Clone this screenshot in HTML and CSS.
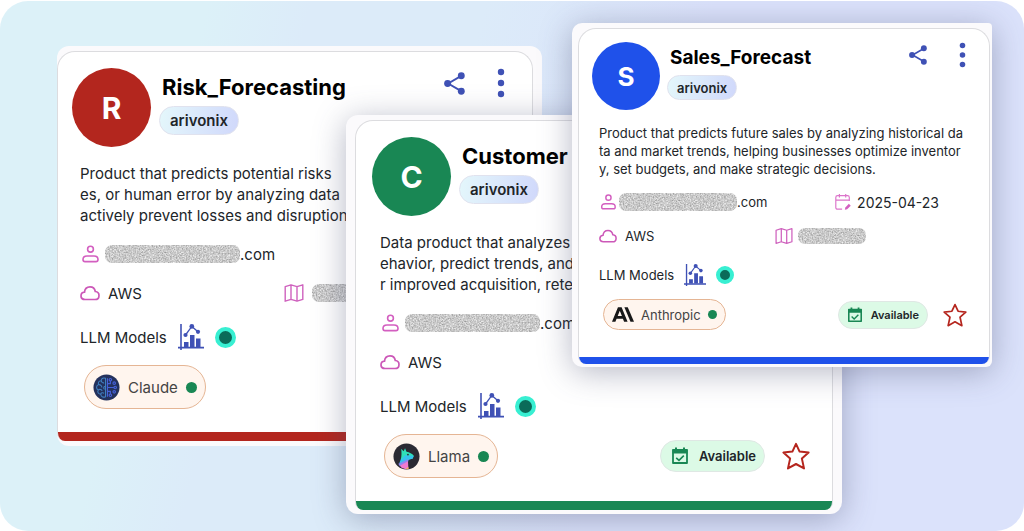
FILE: index.html
```html
<!DOCTYPE html>
<html lang="en">
<head>
    <meta charset="UTF-8">
    <meta name="viewport" content="width=device-width, initial-scale=1.0">
    <title>Data Products</title>
    <link rel="stylesheet" href="styles.css">
</head>
<body>
    <!-- Shared icons -->
    <svg class="sprite" aria-hidden="true">
        <filter id="grain" x="0" y="0" width="100%" height="100%" color-interpolation-filters="sRGB">
            <feTurbulence type="fractalNoise" baseFrequency="0.7" numOctaves="2" seed="4"/>
            <feColorMatrix values="0.5 0 0 0 0.54  0.5 0 0 0 0.54  0.5 0 0 0 0.54  0 0 0 0 1"/>
        </filter>
        <symbol id="share" viewBox="0 0 20 22">
            <path d="M16 4 L4 11 L16 18" fill="none" stroke="#3f51b5" stroke-width="1.8"/>
            <circle cx="16.5" cy="3.6" r="3.3" fill="#3f51b5"/>
            <circle cx="3.4" cy="11" r="3.3" fill="#3f51b5"/>
            <circle cx="16.5" cy="18.4" r="3.3" fill="#3f51b5"/>
        </symbol>
        <symbol id="dots" viewBox="0 0 8 30">
            <circle cx="4" cy="4" r="3.2" fill="#3f51b5"/>
            <circle cx="4" cy="15" r="3.2" fill="#3f51b5"/>
            <circle cx="4" cy="26" r="3.2" fill="#3f51b5"/>
        </symbol>
        <symbol id="user" viewBox="0 0 20 20">
            <g fill="none" stroke="#d35fc0" stroke-width="1.6">
                <circle cx="10.5" cy="5.2" r="2.9"/>
                <path d="M7 12 H14 C16.5 12 18 13.7 18 15.5 C18 16.9 17.2 17.6 16 17.6 H5 C3.8 17.6 3 16.9 3 15.5 C3 13.7 4.5 12 7 12 Z"/>
            </g>
        </symbol>
        <symbol id="cloud" viewBox="0 0 20 20">
            <path d="M5 16.5 C2.6 16.5 1 15 1 12.9 C1 10.9 2.5 9.4 4.5 9.2 C4.8 5.8 7 3.8 10 3.8 C12.9 3.8 14.8 5.5 15.3 8.5 C17.6 8.7 19 10.3 19 12.4 C19 14.8 17.4 16.5 15 16.5 Z" fill="none" stroke="#cc58b8" stroke-width="1.7"/>
        </symbol>
        <symbol id="map" viewBox="0 0 20 20">
            <path d="M1.2 3.6 L7 1.8 L13 3.6 L18.8 1.8 V16.4 L13 18.2 L7 16.4 L1.2 18.2 Z M7 1.8 V16.4 M13 3.6 V18.2" fill="none" stroke="#cf62be" stroke-width="1.4" stroke-linejoin="round"/>
        </symbol>
        <symbol id="calendar" viewBox="0 0 20 20">
            <path d="M9 18 H4 C2.7 18 2 17.3 2 16 V5 C2 3.8 2.7 3 4 3 H15 C16.3 3 17 3.8 17 5 V9 M2 8 H17 M6 1 V5 M13 1 V5" fill="none" stroke="#dc74ca" stroke-width="1.3"/>
            <path d="M12 18.5 L12.6 16 L16.5 12 L18.6 14.2 L14.6 18 Z" fill="#d35fc0"/>
        </symbol>
        <symbol id="chart" viewBox="0 0 26 28">
            <path d="M3 1 V27 M0 24.6 H26" stroke="#3f51b5" stroke-width="1.6"/>
            <path d="M6 19 H10.5 V24 H6 Z M12 12 H16.5 V24 H12 Z M18 15.5 H22.5 V24 H18 Z" fill="#3f51b5"/>
            <path d="M7.5 12 L13.8 3.4 L20 8.8" fill="none" stroke="#3f51b5" stroke-width="1.3"/>
            <circle cx="7.5" cy="12" r="2.1" fill="#3f51b5"/>
            <circle cx="13.8" cy="3.4" r="2.4" fill="#3f51b5"/>
            <circle cx="20" cy="8.8" r="2.1" fill="#3f51b5"/>
        </symbol>
        <symbol id="available" viewBox="0 0 18 18">
            <path d="M2 3 H16 V16 H2 Z" fill="none" stroke="#198754" stroke-width="1.8" stroke-linejoin="round"/>
            <path d="M1.5 2.5 H16.5 V6.5 H1.5 Z M4 0.5 H6 V3 H4 Z M12 0.5 H14 V3 H12 Z" fill="#198754"/>
            <path d="M5.2 10.8 L8 13.4 L12.8 8.6" fill="none" stroke="#198754" stroke-width="1.6"/>
        </symbol>
        <symbol id="star" viewBox="0 0 28 28">
            <path d="M14 1.8 L17.6 9.6 L26.6 10.6 L19.9 16.6 L22 26.4 L14 22 L6 26.4 L8.1 16.6 L1.4 10.6 L10.4 9.6 Z" fill="none" stroke="#b5261e" stroke-width="2" stroke-linejoin="round"/>
        </symbol>
    </svg>

    <main class="stage">
        <section class="frame frame-risk">
            <article class="card card-red">
                <header class="card-header">
                    <div class="avatar">R</div>
                    <div class="heading">
                        <h2>Risk_Forecasting</h2>
                        <span class="tag">arivonix</span>
                    </div>
                    <div class="actions">
                        <button aria-label="Share"><svg class="icon-share"><use href="#share"/></svg></button>
                        <button aria-label="More"><svg class="icon-dots"><use href="#dots"/></svg></button>
                    </div>
                </header>
                <p class="description">Product that predicts potential risks<br>es, or human error by analyzing data<br>actively prevent losses and disruptions</p>
                <div class="row">
                    <svg class="icon"><use href="#user"/></svg>
                    <span class="value value-mail"><svg class="redacted redacted-mail"><rect width="100%" height="100%" filter="url(#grain)"/></svg>.com</span>
                </div>
                <div class="row row-cloud">
                    <svg class="icon"><use href="#cloud"/></svg>
                    <span class="value">AWS</span>
                    <span class="side side-map">
                        <svg class="icon"><use href="#map"/></svg>
                        <svg class="redacted"><rect width="100%" height="100%" filter="url(#grain)"/></svg>
                    </span>
                </div>
                <div class="models">
                    <span>LLM Models</span>
                    <svg class="icon-chart"><use href="#chart"/></svg>
                    <span class="pulse"></span>
                </div>
                <footer class="card-footer">
                    <span class="chip">
                        <svg class="logo" viewBox="0 0 28 28">
                            <circle cx="14" cy="14" r="13.5" fill="#24315c"/>
                            <g fill="none" stroke="#3f7fc0" stroke-width="1.1">
                                <path d="M13 4.5 C10 3.5 8.5 5 8.5 7 C5.5 7 5 9.5 6 11 C3 12 3 15.5 5.5 16.5 C4 19 6 21 8 21 C8.5 24 11 24.5 13 23.5 Z"/>
                                <path d="M8.5 7 C9 9 10.5 9.5 11.5 9 M6 11 C8 11 9.5 12.5 9 14 M5.5 16.5 C7 15.5 9 16 9.5 17.5 M8 21 C8.5 19.5 10 19 11.5 20 M13 13 C11 12.5 10.5 15 12 16"/>
                            </g>
                            <g fill="none" stroke="#4561d8" stroke-width="1.2">
                                <path d="M15 4.5 V23.5 M15 10 H18 V7 M15 14 H22 M15 18 H18 V21"/>
                                <circle cx="18" cy="6" r="1.3"/>
                                <circle cx="22" cy="9.5" r="1.3"/>
                                <circle cx="23" cy="14" r="1.3"/>
                                <circle cx="22" cy="18.5" r="1.3"/>
                                <circle cx="18" cy="22" r="1.3"/>
                            </g>
                        </svg>
                        Claude
                        <span class="status"></span>
                    </span>
                </footer>
            </article>
        </section>

        <section class="frame frame-customer">
            <article class="card card-green">
                <header class="card-header">
                    <div class="avatar">C</div>
                    <div class="heading">
                        <h2>Customer</h2>
                        <span class="tag">arivonix</span>
                    </div>
                </header>
                <p class="description">Data product that analyzes<br>ehavior, predict trends, and<br>r improved acquisition, retention</p>
                <div class="row">
                    <svg class="icon"><use href="#user"/></svg>
                    <span class="value value-mail"><svg class="redacted redacted-mail"><rect width="100%" height="100%" filter="url(#grain)"/></svg>.com</span>
                </div>
                <div class="row row-cloud">
                    <svg class="icon"><use href="#cloud"/></svg>
                    <span class="value">AWS</span>
                </div>
                <div class="models">
                    <span>LLM Models</span>
                    <svg class="icon-chart"><use href="#chart"/></svg>
                    <span class="pulse"></span>
                </div>
                <footer class="card-footer">
                    <span class="chip">
                        <svg class="logo" viewBox="0 0 28 28">
                            <circle cx="14" cy="14" r="13.5" fill="#2b2a33"/>
                            <path d="M8 17 C9 14 9 10 8.5 6 L11 8.5 L12.5 5.5 L14 9 C17 9.5 20 11 21.5 13 L20.5 16 L15 17 Z" fill="#2fe0b8"/>
                            <path d="M8 17 L13 12.5 L21.5 13.5 L20.5 16 L16 17.5 L15.5 20 L6.5 21 Z" fill="#35c4ec"/>
                            <path d="M5.5 21.5 L16 16.5 L15.5 20 L7 24 Z" fill="#8d86f2"/>
                            <path d="M7 23.5 L15.5 19 L16 27 C12.5 27.5 9 26 7 23.5 Z" fill="#f07ad0"/>
                            <path d="M13 27 L16 24.5 V27 Z" fill="#f5b04c"/>
                            <circle cx="15.5" cy="12" r="0.9" fill="#2b2a33"/>
                        </svg>
                        Llama
                        <span class="status"></span>
                    </span>
                    <span class="available"><svg class="icon-available"><use href="#available"/></svg>Available</span>
                    <button class="favorite" aria-label="Add to favorites"><svg class="icon-star"><use href="#star"/></svg></button>
                </footer>
            </article>
        </section>

        <section class="frame frame-sales">
            <article class="card card-blue">
                <header class="card-header">
                    <div class="avatar">S</div>
                    <div class="heading">
                        <h2>Sales_Forecast</h2>
                        <span class="tag">arivonix</span>
                    </div>
                    <div class="actions">
                        <button aria-label="Share"><svg class="icon-share"><use href="#share"/></svg></button>
                        <button aria-label="More"><svg class="icon-dots"><use href="#dots"/></svg></button>
                    </div>
                </header>
                <p class="description">Product that predicts future sales by analyzing historical da<br>ta and market trends, helping businesses optimize inventor<br>y, set budgets, and make strategic decisions.</p>
                <div class="row">
                    <svg class="icon"><use href="#user"/></svg>
                    <span class="value value-mail"><svg class="redacted redacted-mail"><rect width="100%" height="100%" filter="url(#grain)"/></svg>.com</span>
                    <span class="side side-date">
                        <svg class="icon"><use href="#calendar"/></svg>
                        2025-04-23
                    </span>
                </div>
                <div class="row row-cloud">
                    <svg class="icon"><use href="#cloud"/></svg>
                    <span class="value">AWS</span>
                    <span class="side side-map">
                        <svg class="icon"><use href="#map"/></svg>
                        <svg class="redacted"><rect width="100%" height="100%" filter="url(#grain)"/></svg>
                    </span>
                </div>
                <div class="models">
                    <span>LLM Models</span>
                    <svg class="icon-chart"><use href="#chart"/></svg>
                    <span class="pulse"></span>
                </div>
                <footer class="card-footer">
                    <span class="chip">
                        <svg class="logo" viewBox="0 0 24 18">
                            <path d="M6.5 1 H10.5 L17 17 H13.2 L11.9 13.5 H5 L3.7 17 H0 Z M8.5 4.8 L6.2 10.6 H10.8 Z" fill="#181818" fill-rule="evenodd"/>
                            <path d="M13.5 1 H17.2 L24 17 H20.2 Z" fill="#181818"/>
                        </svg>
                        Anthropic
                        <span class="status"></span>
                    </span>
                    <span class="available"><svg class="icon-available"><use href="#available"/></svg>Available</span>
                    <button class="favorite" aria-label="Add to favorites"><svg class="icon-star"><use href="#star"/></svg></button>
                </footer>
            </article>
        </section>
    </main>
</body>
</html>
```
FILE: styles.css
```css
* {
    box-sizing: border-box;
}
body {
    margin: 0;
    padding-top: 1px;
    background-color: #fff;
    font-family: Inter, "Liberation Sans", sans-serif;
    color: #212529;
}
h2, p {
    margin: 0;
}
button {
    padding: 0;
    border: none;
    background: none;
    cursor: pointer;
}
svg {
    display: block;
    flex: none;
}
.sprite {
    position: absolute;
    width: 0;
    height: 0;
}
.stage {
    position: relative;
    min-height: calc(100vh - 1px);
    overflow: hidden;
    border-radius: 28px;
    background: linear-gradient(104deg, #dcf1f8 0%, #dcf1f8 18%, #dcebf9 27%, #dcebf9 42%, #dbe2fb 62%, #dbe2fb 100%);
}

/* Overlapping product cards */
.frame {
    position: absolute;
    border-radius: 12px;
    background-color: #fbfafc;
}
.frame-risk {
    left: 57px;
    top: 45px;
    width: 485px;
    padding: 5px 9px 5px 0;
}
.frame-customer {
    left: 346px;
    top: 114px;
    width: 496px;
    padding: 5px 9px 4px 9px;
    box-shadow: 0 5px 32px rgba(70, 75, 110, 0.4);
}
.frame-sales {
    left: 572px;
    top: 22px;
    width: 420px;
    padding: 5px 2px 3px 6px;
    border-radius: 10px 4px 6px 10px;
    box-shadow: 0 5px 32px rgba(70, 75, 110, 0.4);
}
.card {
    overflow: hidden;
    padding: 16px 24px 0;
    border: 1px solid #dcdcdf;
    border-bottom: none;
    border-radius: 18px 18px 8px 8px;
    background-color: #fff;
    font-size: 15px;
    white-space: nowrap;
}
.card::after {
    content: "";
    display: block;
    height: 9px;
    margin: 23px -24px 0;
    background-color: #b3261e;
}
.card-red {
    padding-left: 22px;
}
.card-green {
    padding-right: 22px;
}
.card-green::after {
    background-color: #198754;
}
.card-blue::after {
    background-color: #1f51ea;
}

.card-header {
    display: flex;
    align-items: flex-start;
    margin-left: -8px;
}
.avatar {
    display: flex;
    align-items: center;
    justify-content: center;
    flex: none;
    width: 79px;
    height: 79px;
    border-radius: 50%;
    background-color: #b3261e;
    color: #fff;
    font-size: 30px;
    font-weight: 700;
}
.card-green .avatar {
    background-color: #198754;
}
.card-blue .avatar {
    background-color: #1f51ea;
}
.heading {
    flex: 1;
    margin: 5px 0 0 8px;
}
.heading h2 {
    padding-left: 3px;
    color: #000;
    font-size: 22px;
    font-weight: 700;
    line-height: 28px;
}
.tag {
    display: inline-flex;
    align-items: center;
    height: 29px;
    margin-top: 5px;
    padding: 0 10px;
    border: 1px solid #e0e2ee;
    border-radius: 15px;
    background: linear-gradient(100deg, #e4f7fb, #d0d8fb);
    font-size: 15px;
    font-weight: 600;
}
.actions {
    display: flex;
    align-items: center;
    gap: 32px;
    margin-right: 3px;
}
.icon-share {
    width: 21px;
    height: 23px;
}
.icon-dots {
    width: 8px;
    height: 30px;
}
.description {
    margin-top: 16px;
    line-height: 21px;
}
.row {
    display: flex;
    align-items: center;
    height: 20px;
    margin-top: 18px;
}
.row-cloud {
    margin-top: 19px;
}
.icon {
    width: 20px;
    height: 20px;
}
.value {
    display: flex;
    align-items: center;
    margin-left: 8px;
}
.value-mail {
    margin-left: 5px;
}
.redacted {
    width: 78px;
    height: 18px;
    border-radius: 7px;
}
.redacted-mail {
    width: 135px;
}
.side {
    display: flex;
    align-items: center;
    gap: 8px;
    margin-left: auto;
}
.card-red .side {
    margin-right: 118px;
}
.models {
    display: flex;
    align-items: center;
    height: 28px;
    margin-top: 20px;
}
.icon-chart {
    width: 26px;
    height: 28px;
    margin: 0 11px;
}
.pulse {
    width: 21px;
    height: 21px;
    border: 4px solid #38efd2;
    border-radius: 50%;
    background-color: #0b6b59;
}
.card-footer {
    display: flex;
    align-items: center;
    margin-top: 14px;
}
.chip {
    display: flex;
    align-items: center;
    gap: 8px;
    height: 44px;
    margin: 0 auto 0 4px;
    padding: 0 8px;
    border: 1px solid #e5b594;
    border-radius: 22px;
    background-color: #fff5ee;
    color: #444;
}
.logo {
    width: 27px;
    height: 27px;
}
.status {
    width: 11px;
    height: 11px;
    border-radius: 50%;
    background-color: #198754;
}
.available {
    display: flex;
    align-items: center;
    gap: 10px;
    height: 32px;
    padding: 0 8px 0 10px;
    border: 1px solid #dfe8e4;
    border-radius: 16px;
    background-color: #dcfae6;
    font-size: 13px;
    font-weight: 600;
}
.icon-available {
    width: 18px;
    height: 18px;
}
.favorite {
    margin-left: 17px;
}
.icon-star {
    width: 28px;
    height: 28px;
}

/* Compact card */
.card-blue {
    padding: 13px 20px 0;
    font-size: 13px;
}
.card-blue::after {
    height: 7px;
    margin: 27px -20px 0;
}
.card-blue .card-header {
    margin-left: -7px;
}
.card-blue .avatar {
    width: 68px;
    height: 68px;
    font-size: 26px;
}
.card-blue .heading {
    margin: 4px 0 0 7px;
}
.card-blue .heading h2 {
    font-size: 19px;
    line-height: 24px;
}
.card-blue .tag {
    height: 25px;
    padding: 0 9px;
    font-size: 13px;
}
.card-blue .icon-share {
    width: 18px;
    height: 20px;
}
.card-blue .icon-dots {
    width: 7px;
    height: 26px;
}
.card-blue .description {
    margin-top: 14px;
    line-height: 18px;
}
.card-blue .row {
    height: 18px;
    margin-top: 15px;
}
.card-blue .row-cloud {
    margin-top: 16px;
}
.card-blue .icon {
    width: 18px;
    height: 18px;
}
.card-blue .value-mail {
    margin-left: 2px;
}
.card-blue .redacted {
    width: 68px;
    height: 16px;
}
.card-blue .redacted-mail {
    width: 118px;
    height: 18px;
}
.card-blue .side {
    gap: 5px;
}
.card-blue .side-date {
    margin-right: 30px;
    font-size: 14px;
}
.card-blue .side-map {
    margin-right: 103px;
}
.card-blue .models {
    height: 24px;
    margin-top: 18px;
}
.card-blue .icon-chart {
    width: 22px;
    height: 24px;
    margin: 0 10px;
}
.card-blue .pulse {
    width: 18px;
    height: 18px;
}
.card-blue .card-footer {
    margin-top: 12px;
}
.card-blue .chip {
    height: 31px;
    gap: 7px;
}
.card-blue .logo {
    width: 22px;
    height: 17px;
}
.card-blue .status {
    width: 9px;
    height: 9px;
}
.card-blue .available {
    gap: 8px;
    height: 28px;
    padding: 0 8px;
    font-size: 11px;
}
.card-blue .icon-available {
    width: 16px;
    height: 16px;
}
.card-blue .favorite {
    margin: 0 2px 0 15px;
}
.card-blue .icon-star {
    width: 24px;
    height: 24px;
}
```
